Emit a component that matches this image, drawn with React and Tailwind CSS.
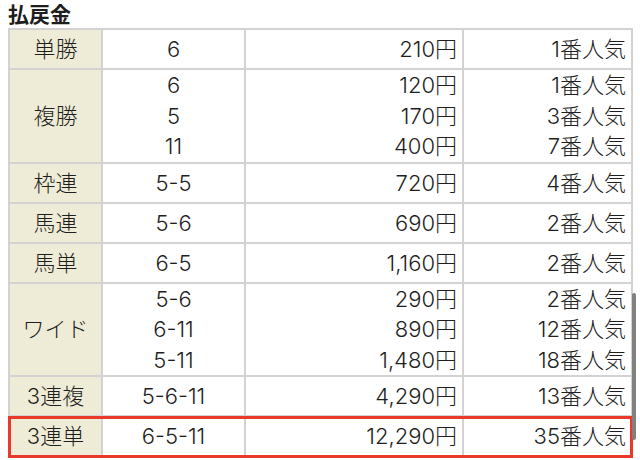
import React from "react";

const rows = [
  { label: "単勝", items: [["6", "210円", "1番人気"]] },
  {
    label: "複勝",
    items: [
      ["6", "120円", "1番人気"],
      ["5", "170円", "3番人気"],
      ["11", "400円", "7番人気"],
    ],
  },
  { label: "枠連", items: [["5-5", "720円", "4番人気"]] },
  { label: "馬連", items: [["5-6", "690円", "2番人気"]] },
  { label: "馬単", items: [["6-5", "1,160円", "2番人気"]] },
  {
    label: "ワイド",
    items: [
      ["5-6", "290円", "2番人気"],
      ["6-11", "890円", "12番人気"],
      ["5-11", "1,480円", "18番人気"],
    ],
  },
  { label: "3連複", items: [["5-6-11", "4,290円", "13番人気"]] },
  { label: "3連単", items: [["6-5-11", "12,290円", "35番人気"]] },
];

const Cell = ({ multi, className = "", children }) => (
  <div
    className={
      "bg-white " + (multi ? "py-0 leading-[30.5px] " : "py-[4px] leading-[30px] ") + className
    }
  >
    {children}
  </div>
);

const App = () => {
  return (
    <div
      className="relative w-[640px] h-[460px] overflow-hidden bg-white text-[#1e1e1e]"
      style={{ fontFamily: 'Inter, "Noto Sans CJK JP", "Noto Sans", sans-serif' }}
    >
      <h2
        className="pl-[8px] h-[28px] text-[21px] font-bold leading-[26px]"
        style={{ fontFamily: '"Noto Sans CJK JP", sans-serif' }}
      >
        払戻金
      </h2>

      <div className="relative ml-[8px] w-[625px]">
        <div className="grid grid-cols-[91px_141px_216px_167px] gap-[2px] bg-[#d2d2d2] p-[2px] text-[22px] font-light">
          {rows.map((row) => {
            const multi = row.items.length > 1;
            return (
              <React.Fragment key={row.label}>
                <Cell multi={multi} className="!bg-[#eeecd6] flex items-center justify-center">
                  {row.label}
                </Cell>
                <Cell multi={multi} className="text-center">
                  {row.items.map((it, i) => (
                    <div key={i}>{it[0]}</div>
                  ))}
                </Cell>
                <Cell multi={multi} className="text-right pr-[5px]">
                  {row.items.map((it, i) => (
                    <div key={i}>{it[1]}</div>
                  ))}
                </Cell>
                <Cell multi={multi} className="text-right pr-[5px]">
                  {row.items.map((it, i) => (
                    <div key={i}>{it[2]}</div>
                  ))}
                </Cell>
              </React.Fragment>
            );
          })}
        </div>
        <div className="absolute left-0 right-0 bottom-[-1px] h-[42px] border-[3px] border-[#e8392b]" />
      </div>

      <div className="absolute left-[632px] top-[293px] w-[4px] h-[147px] rounded-full bg-[#808080]" />
    </div>
  );
};

export default App;
